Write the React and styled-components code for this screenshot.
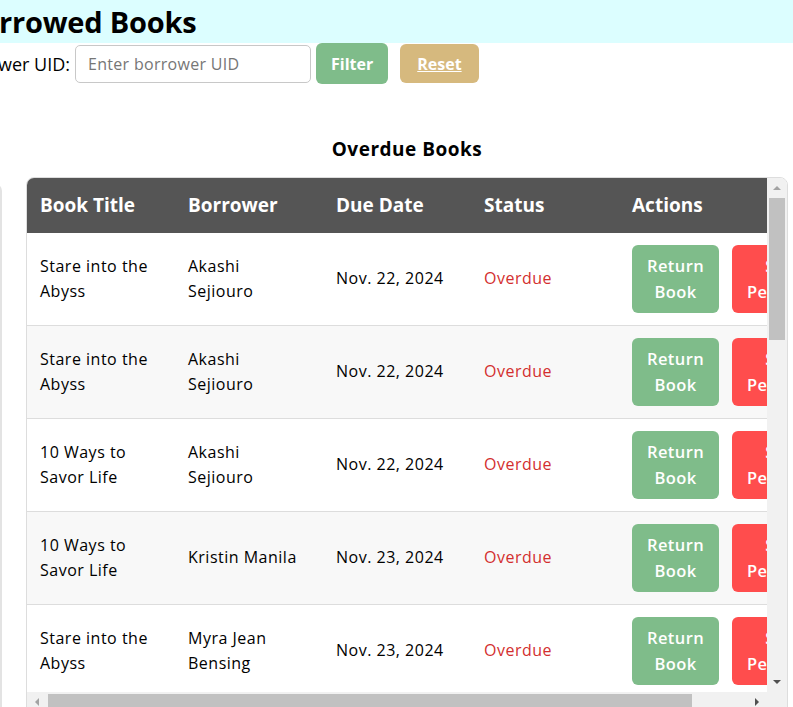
import React from "react";
import styled, { createGlobalStyle } from "styled-components";

const Global = createGlobalStyle`
  html, body {
    margin: 0;
    padding: 0;
    background: #ffffff;
    overflow: hidden;
  }
  body {
    font-family: "Open Sans", "Noto Sans", Arial, sans-serif;
    color: #000;
  }
  * { box-sizing: border-box; }
`;

const Page = styled.div`
  width: 793px;
  height: 707px;
  overflow: hidden;
`;

const TopBar = styled.header`
  height: 43px;
  background: #dcfeff;
  display: flex;
  align-items: center;
  overflow: hidden;
`;

const Title = styled.h1`
  margin: 0 0 0 ${(p) => p.$shift}px;
  font-size: 29px;
  font-weight: 700;
  line-height: 43px;
  white-space: nowrap;
  letter-spacing: -0.2px;
`;

const FilterRow = styled.div`
  display: flex;
  align-items: center;
  height: 41px;
  margin-left: ${(p) => p.$shift}px;
`;

const Label = styled.label`
  font-size: 18px;
  font-weight: 500;
  margin-right: 5px;
  white-space: nowrap;
`;

const Input = styled.input`
  width: 236px;
  height: 38px;
  border: 1px solid #c8c8c8;
  border-radius: 5px;
  padding: 0 12px;
  font-family: inherit;
  font-size: 16px;
  letter-spacing: 0.3px;
  color: #333;
  outline: none;
  margin-right: 5px;
  &::placeholder { color: #767676; }
`;

const ActionButton = styled.button`
  height: ${(p) => p.$h}px;
  padding: 0 ${(p) => p.$px}px;
  border: none;
  border-radius: 6px;
  background: ${(p) => p.$bg};
  color: #fff;
  font-family: inherit;
  font-size: 16px;
  font-weight: 700;
  text-decoration: ${(p) => (p.$underline ? "underline" : "none")};
  margin-left: ${(p) => p.$ml || 0}px;
  cursor: pointer;
`;

const Main = styled.div`
  display: flex;
  align-items: flex-start;
  margin-left: -98px;
`;

const SideCard = styled.aside`
  width: 100px;
  height: 540px;
  margin-top: 99px;
  border-right: 2px solid #e3e3e3;
  border-top-right-radius: 8px;
  flex-shrink: 0;
`;

const Section = styled.section`
  width: 762px;
  margin-left: 24px;
  padding-top: 50px;
  flex-shrink: 0;
`;

const SectionTitle = styled.h2`
  margin: 0 0 13px 0;
  text-align: center;
  font-size: 19px;
  font-weight: 700;
  line-height: 30px;
  letter-spacing: 0.5px;
`;

/* table frame with its scroll bars laid out as a grid */
const TableFrame = styled.div`
  height: 536px;
  display: grid;
  grid-template-columns: 1fr 20px;
  grid-template-rows: 1fr 20px;
  border: 1px solid #dddddd;
  border-radius: 8px 8px 0 0;
  overflow: hidden;
`;

const Viewport = styled.div`
  overflow: hidden;
  min-width: 0;
  min-height: 0;
`;

const ScrollBar = styled.div`
  display: flex;
  flex-direction: ${(p) => (p.$vertical ? "column" : "row")};
  background: #f1f1f1;
`;

const ScrollButton = styled.div`
  flex: 0 0 20px;
  width: 20px;
  height: 20px;
  display: flex;
  align-items: center;
  justify-content: center;
`;

const Arrow = styled.span`
  width: 0;
  height: 0;
  border-style: solid;
  border-color: transparent;
  ${(p) =>
    p.$dir === "up"
      ? `border-width: 0 4px 4px 4px; border-bottom-color: ${p.$color};`
      : p.$dir === "down"
      ? `border-width: 4px 4px 0 4px; border-top-color: ${p.$color};`
      : p.$dir === "left"
      ? `border-width: 4px 4px 4px 0; border-right-color: ${p.$color};`
      : `border-width: 4px 0 4px 4px; border-left-color: ${p.$color};`}
`;

const Track = styled.div`
  flex: 1;
  display: flex;
  flex-direction: ${(p) => (p.$vertical ? "column" : "row")};
  padding: ${(p) => (p.$vertical ? "0 2px 0 2px" : "2px 0 2px 1px")};
`;

const Thumb = styled.div`
  background: #c1c1c1;
  flex: 0 0 ${(p) => p.$size}px;
`;

const Corner = styled.div`
  background: #f1f1f1;
`;

const Table = styled.table`
  width: 808px;
  table-layout: fixed;
  border-collapse: collapse;
`;

const Th = styled.th`
  background: #555555;
  color: #fff;
  text-align: left;
  font-size: 19px;
  font-weight: 700;
  line-height: 31px;
  padding: 12px 13px;
  white-space: nowrap;
`;

const Row = styled.tr`
  background: ${(p) => (p.$alt ? "#f8f8f8" : "#ffffff")};
  border-bottom: 1px solid #dddddd;
`;

const Td = styled.td`
  padding: 12px 22px 12px 13px;
  font-size: 16px;
  line-height: 25.5px;
  letter-spacing: 0.5px;
  vertical-align: middle;
  color: ${(p) => p.$color || "#000"};
`;

const Actions = styled.div`
  display: flex;
  gap: 13px;
`;

const RowButton = styled.button`
  width: min-content;
  padding: 8px 15px;
  border: none;
  border-radius: 6px;
  background: ${(p) => p.$bg};
  color: #fff;
  font-family: inherit;
  font-size: 16.5px;
  font-weight: 600;
  line-height: 26px;
  letter-spacing: 0.4px;
  text-align: center;
  cursor: pointer;
`;

const rows = [
  ["Stare into the Abyss", "Akashi Sejiouro", "Nov. 22, 2024"],
  ["Stare into the Abyss", "Akashi Sejiouro", "Nov. 22, 2024"],
  ["10 Ways to Savor Life", "Akashi Sejiouro", "Nov. 22, 2024"],
  ["10 Ways to Savor Life", "Kristin Manila", "Nov. 23, 2024"],
  ["Stare into the Abyss", "Myra Jean Bensing", "Nov. 23, 2024"],
  ["10 Ways to Savor Life", "Myra Jean Bensing", "Nov. 23, 2024"],
  ["Stare into the Abyss", "Kristin Manila", "Nov. 24, 2024"],
  ["10 Ways to Savor Life", "Akashi Sejiouro", "Nov. 24, 2024"],
  ["Stare into the Abyss", "Myra Jean Bensing", "Nov. 24, 2024"],
  ["10 Ways to Savor Life", "Kristin Manila", "Nov. 25, 2024"],
  ["Stare into the Abyss", "Akashi Sejiouro", "Nov. 25, 2024"],
  ["10 Ways to Savor Life", "Myra Jean Bensing", "Nov. 25, 2024"],
  ["Stare into the Abyss", "Kristin Manila", "Nov. 26, 2024"],
  ["10 Ways to Savor Life", "Akashi Sejiouro", "Nov. 26, 2024"],
  ["Stare into the Abyss", "Myra Jean Bensing", "Nov. 27, 2024"],
  ["10 Ways to Savor Life", "Kristin Manila", "Nov. 27, 2024"],
  ["Stare into the Abyss", "Akashi Sejiouro", "Nov. 28, 2024"],
  ["10 Ways to Savor Life", "Myra Jean Bensing", "Nov. 28, 2024"],
];

export default function App() {
  return (
    <>
      <Global />
      <Page>
        <TopBar>
          <Title $shift={-38}>Borrowed Books</Title>
        </TopBar>
        <FilterRow $shift={-50}>
          <Label htmlFor="uid">Borrower UID:</Label>
          <Input id="uid" placeholder="Enter borrower UID" />
          <ActionButton $bg="#7fbc8a" $h={41} $px={15}>Filter</ActionButton>
          <ActionButton $bg="#d6b97e" $h={39} $px={17} $ml={12} $underline>
            Reset
          </ActionButton>
        </FilterRow>
        <Main>
          <SideCard />
          <Section>
            <SectionTitle>Overdue Books</SectionTitle>
            <TableFrame>
              <Viewport>
                <Table>
                  <colgroup>
                    <col style={{ width: 148 }} />
                    <col style={{ width: 148 }} />
                    <col style={{ width: 148 }} />
                    <col style={{ width: 148 }} />
                    <col style={{ width: 216 }} />
                  </colgroup>
                  <thead>
                    <tr>
                      <Th>Book Title</Th>
                      <Th>Borrower</Th>
                      <Th>Due Date</Th>
                      <Th>Status</Th>
                      <Th>Actions</Th>
                    </tr>
                  </thead>
                  <tbody>
                    {rows.map((r, i) => (
                      <Row key={i} $alt={i % 2 === 1}>
                        <Td>{r[0]}</Td>
                        <Td>{r[1]}</Td>
                        <Td>{r[2]}</Td>
                        <Td $color="#d32f2f">Overdue</Td>
                        <Td>
                          <Actions>
                            <RowButton $bg="#7fbc8a">Return Book</RowButton>
                            <RowButton $bg="#ff4d4d">Set Penalty</RowButton>
                          </Actions>
                        </Td>
                      </Row>
                    ))}
                  </tbody>
                </Table>
              </Viewport>
              <ScrollBar $vertical>
                <ScrollButton><Arrow $dir="up" $color="#a3a3a3" /></ScrollButton>
                <Track $vertical>
                  <Thumb $size={142} />
                </Track>
                <ScrollButton><Arrow $dir="down" $color="#505050" /></ScrollButton>
              </ScrollBar>
              <ScrollBar>
                <ScrollButton><Arrow $dir="left" $color="#a3a3a3" /></ScrollButton>
                <Track>
                  <Thumb $size={644} />
                </Track>
                <ScrollButton><Arrow $dir="right" $color="#505050" /></ScrollButton>
              </ScrollBar>
              <Corner />
            </TableFrame>
          </Section>
        </Main>
      </Page>
    </>
  );
}
